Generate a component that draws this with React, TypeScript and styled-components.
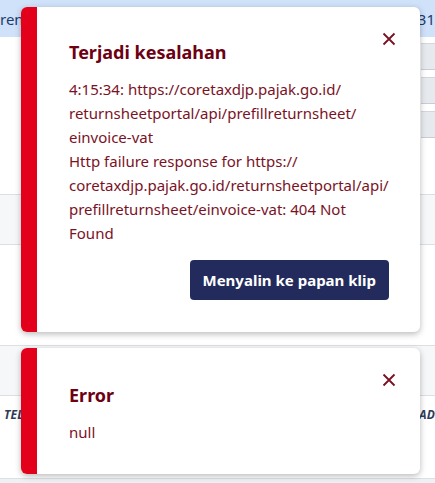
import React from 'react';
import styled, { createGlobalStyle } from 'styled-components';

const GlobalStyle = createGlobalStyle`
  html, body {
    margin: 0;
    padding: 0;
    background: #ffffff;
  }
  body {
    font-family: "Noto Sans", "Open Sans", Arial, sans-serif;
    overflow: hidden;
  }
`;

const Page = styled.div`
  position: relative;
  width: 435px;
  height: 483px;
  overflow: hidden;
`;

/* table underneath the toasts */
const Table = styled.div`
  display: flex;
  flex-direction: column;
  width: 100%;
`;

const HeadRow = styled.div`
  height: 37px;
  display: flex;
  align-items: center;
  justify-content: space-between;
  background: #cfe2fa;
  color: #1d3c6c;
  font-size: 15px;
`;

const Cell = styled.span`
  white-space: nowrap;
`;

const FilterRow = styled.div`
  height: 158px;
  display: flex;
  justify-content: flex-end;
  border-bottom: 1px solid #dcdfe4;
  box-sizing: border-box;
`;

const FilterColumn = styled.div`
  width: 14px;
  display: flex;
  flex-direction: column;
  gap: 7px;
  padding-top: 6px;
`;

const FilterBox = styled.div`
  height: 27px;
  background: #e6e9ed;
  border-top: 1px solid #d3d7dd;
  border-bottom: 1px solid #c9cdd3;
  box-sizing: border-box;
`;

const BodyRow = styled.div<{ $height: number; $shade?: boolean }>`
  height: ${(p) => p.$height}px;
  display: flex;
  align-items: flex-start;
  justify-content: space-between;
  padding: 0 0 0 4px;
  background: ${(p) => (p.$shade ? '#f6f7f9' : '#ffffff')};
  border-bottom: 1px solid #dcdfe4;
  box-sizing: border-box;
`;

const ColumnLabel = styled.span`
  margin-top: 10px;
  font-size: 12px;
  font-weight: 700;
  font-style: italic;
  color: #2f3d58;
  letter-spacing: 0.2px;
  white-space: nowrap;
`;

const FooterRow = styled.div`
  height: 10px;
  background: #eef0f3;
`;

/* toast notifications */
const ToastStack = styled.div`
  position: absolute;
  top: 7px;
  left: 21px;
  width: 399px;
  display: flex;
  flex-direction: column;
  gap: 16px;
`;

const Toast = styled.div<{ $top: number; $bottom: number }>`
  position: relative;
  display: flex;
  background: #ffffff;
  border-radius: 6px;
  overflow: hidden;
  box-shadow: 0 2px 6px rgba(0, 0, 0, 0.28);
  padding: ${(p) => p.$top}px 31px ${(p) => p.$bottom}px 0;
`;

const Stripe = styled.div`
  position: absolute;
  left: 0;
  top: 0;
  bottom: 0;
  width: 16px;
  background: #e2001a;
`;

const Content = styled.div`
  margin-left: 48px;
  flex: 1;
  min-width: 0;
  display: flex;
  flex-direction: column;
`;

const Title = styled.h3`
  margin: 0;
  font-size: 18px;
  line-height: 23px;
  font-weight: 700;
  color: #6d0012;
`;

const Message = styled.div`
  margin-top: 13px;
  font-size: 15px;
  line-height: 24px;
  color: #7a1226;
  overflow-wrap: break-word;
`;

const Actions = styled.div`
  display: flex;
  justify-content: flex-end;
  margin-top: 15px;
`;

const CopyButton = styled.button`
  height: 40px;
  padding: 0 13px;
  border: none;
  border-radius: 4px;
  background: #222b5c;
  color: #ffffff;
  font-family: inherit;
  font-size: 15px;
  font-weight: 700;
  cursor: pointer;
`;

const CloseButton = styled.button`
  position: absolute;
  top: 25px;
  right: 24px;
  width: 14px;
  height: 14px;
  padding: 0;
  border: none;
  background: none;
  color: #7b1022;
  cursor: pointer;
  display: flex;
  align-items: center;
  justify-content: center;
`;

const CloseIcon = () => (
  <svg width="14" height="14" viewBox="0 0 14 14" fill="none">
    <path d="M1.5 1.5L12.5 12.5M12.5 1.5L1.5 12.5" stroke="currentColor" strokeWidth="1.8" />
  </svg>
);

// lets long URLs wrap after each slash
const Url = ({ text }: { text: string }) => {
  const parts = text.split('/');
  return (
    <>
      {parts.map((part, i) => (
        <React.Fragment key={i}>
          {part}
          {i < parts.length - 1 && (
            <>
              /<wbr />
            </>
          )}
        </React.Fragment>
      ))}
    </>
  );
};

type ToastProps = {
  title: string;
  message: React.ReactNode;
  action?: string;
  top: number;
  bottom: number;
};

const ErrorToast = ({ title, message, action, top, bottom }: ToastProps) => (
  <Toast $top={top} $bottom={bottom}>
    <Stripe />
    <CloseButton aria-label="Tutup">
      <CloseIcon />
    </CloseButton>
    <Content>
      <Title>{title}</Title>
      <Message>{message}</Message>
      {action && (
        <Actions>
          <CopyButton>{action}</CopyButton>
        </Actions>
      )}
    </Content>
  </Toast>
);

const endpoint = 'https://coretaxdjp.pajak.go.id/returnsheetportal/api/prefillreturnsheet/einvoice-vat';

const App = () => {
  return (
    <Page>
      <GlobalStyle />
      <Table>
        <HeadRow>
          <Cell>rentang</Cell>
          <Cell>31</Cell>
        </HeadRow>
        <FilterRow>
          <FilterColumn>
            <FilterBox />
            <FilterBox />
            <FilterBox />
          </FilterColumn>
        </FilterRow>
        <BodyRow $height={50} $shade />
        <BodyRow $height={101} />
        <BodyRow $height={50} $shade />
        <BodyRow $height={83}>
          <ColumnLabel>TELP</ColumnLabel>
          <ColumnLabel>AD</ColumnLabel>
        </BodyRow>
        <FooterRow />
      </Table>

      <ToastStack>
        <ErrorToast
          title="Terjadi kesalahan"
          message={
            <>
              4:15:34: <Url text={endpoint} />
              <br />
              Http failure response for <Url text={endpoint} />: 404 Not Found
            </>
          }
          action="Menyalin ke papan klip"
          top={34}
          bottom={32}
        />
        <ErrorToast title="Error" message="null" top={36} bottom={30} />
      </ToastStack>
    </Page>
  );
};

export default App;
